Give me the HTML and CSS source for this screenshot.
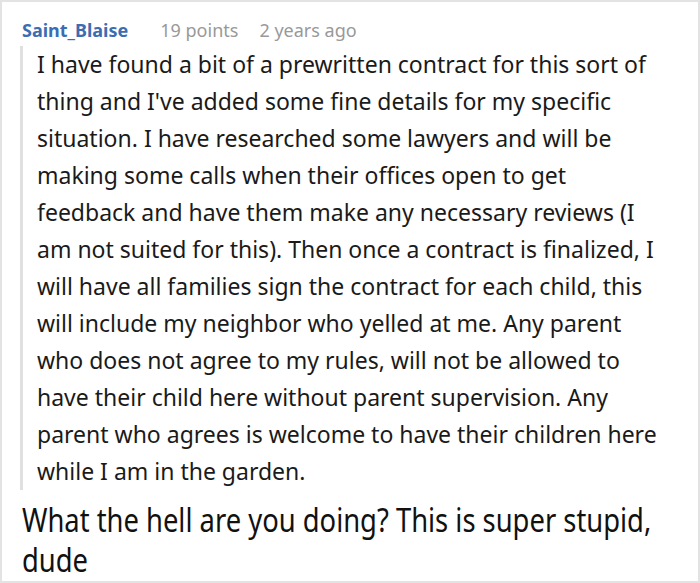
FILE: index.html
```html
<!DOCTYPE html>
<html>
<head>
<meta charset="utf-8">
<link rel="stylesheet" href="styles.css">
</head>
<body>
<div class="frame">
  <div class="meta">
    <span class="user">Saint_Blaise</span>
    <span class="info points">19 points</span>
    <span class="info">2 years ago</span>
  </div>
  <blockquote class="quote">I have found a bit of a prewritten contract for this sort of thing and I've added some fine details for my specific situation. I have researched some lawyers and will be making some calls when their offices open to get feedback and have them make any necessary reviews (I am not suited for this). Then once a contract is finalized, I will have all families sign the contract for each child, this will include my neighbor who yelled at me. Any parent who does not agree to my rules, will not be allowed to have their child here without parent supervision. Any parent who agrees is welcome to have their children here while I am in the garden.</blockquote>
  <p class="reply">What the hell are you doing? This is super stupid, dude</p>
</div>
</body>
</html>
```
FILE: styles.css
```css
html, body {
  margin: 0;
  padding: 0;
  background: #fff;
}
.frame {
  box-sizing: border-box;
  width: 700px;
  height: 583px;
  border: 2px solid #e3e3e3;
  padding: 17px 28px 0 20px;
  font-family: "Noto Sans", "Open Sans", sans-serif;
  overflow: hidden;
}
.meta {
  display: flex;
  font-size: 18px;
  line-height: 22px;
}
.user {
  color: #3b6db3;
  font-weight: 700;
  margin-right: 32px;
}
.info {
  color: #999;
}
.points {
  margin-right: 21px;
}
.quote {
  margin: 5px 0 0 -2px;
  border-left: 3px solid #e0e0e0;
  padding: 0 0 0 14px;
  font-size: 23px;
  line-height: 37px;
  color: #1a1a1a;
}
.reply {
  margin: 10px 0 0 0;
  width: 755px;
  font-size: 32px;
  line-height: 40px;
  color: #111;
  transform: scaleX(0.855);
  transform-origin: left top;
}
```
